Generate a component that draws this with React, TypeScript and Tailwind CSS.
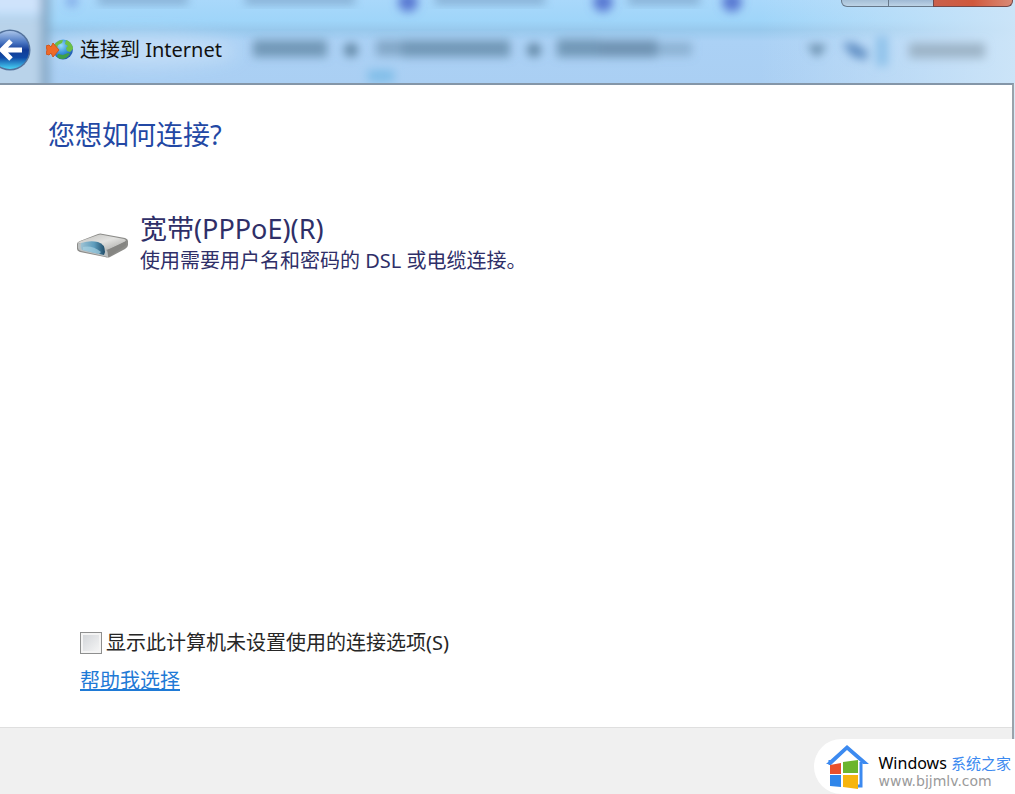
function GlassBackdrop() {
    return (
        <svg
            className="absolute inset-0 h-full w-full"
            viewBox="0 0 1015 83"
            preserveAspectRatio="none"
            aria-hidden="true"
        >
            <defs>
                <linearGradient id="glass" x1="0" y1="0" x2="0" y2="1">
                    <stop offset="0" stopColor="#a9d8fb" />
                    <stop offset="0.25" stopColor="#9fd5f9" />
                    <stop offset="0.36" stopColor="#98c9ed" />
                    <stop offset="0.5" stopColor="#abd1f5" />
                    <stop offset="1" stopColor="#aacff3" />
                </linearGradient>
                <linearGradient id="glassRight" x1="0" y1="0" x2="1" y2="0">
                    <stop offset="0" stopColor="#cde5f8" stopOpacity="0" />
                    <stop offset="1" stopColor="#cde5f8" stopOpacity="0.95" />
                </linearGradient>
                <filter id="soft" x="-20%" y="-50%" width="140%" height="200%">
                    <feGaussianBlur stdDeviation="5" />
                </filter>
                <filter id="softer" x="-30%" y="-80%" width="160%" height="260%">
                    <feGaussianBlur stdDeviation="9" />
                </filter>
            </defs>
            <rect width="1015" height="83" fill="url(#glass)" />
            <rect x="760" width="255" height="83" fill="url(#glassRight)" />

            {/* window behind, left edge */}
            <g filter="url(#soft)">
                <rect x="-10" y="-10" width="52" height="24" fill="#cfe3fb" />
                <rect x="-10" y="16" width="52" height="80" fill="#b9d3ea" />
                <rect x="41" y="-10" width="8" height="110" fill="#7fa2c0" />
            </g>
            <ellipse cx="145" cy="51" rx="92" ry="15" fill="#c8e0f7" opacity="0.8" filter="url(#softer)" />

            {/* tab strip */}
            <g filter="url(#soft)" fill="#7398bd" opacity="0.7">
                <rect x="98" y="-5" width="90" height="9" />
                <rect x="245" y="-5" width="110" height="9" />
                <rect x="435" y="-5" width="110" height="9" />
                <rect x="628" y="-5" width="72" height="9" />
            </g>
            <g filter="url(#soft)" fill="#5878d2">
                <circle cx="72" cy="1" r="6" opacity="0.5" />
                <circle cx="408" cy="2" r="10" />
                <circle cx="603" cy="2" r="10" />
                <circle cx="732" cy="2" r="10" />
            </g>

            {/* address bar */}
            <g filter="url(#soft)" fill="#6085a3">
                <rect x="253" y="40" width="74" height="17" opacity="0.75" />
                <circle cx="351" cy="50" r="7" />
                <rect x="376" y="40" width="26" height="16" opacity="0.55" />
                <rect x="402" y="40" width="108" height="17" opacity="0.75" />
                <circle cx="534" cy="50" r="7" />
                <rect x="557" y="39" width="42" height="18" opacity="0.75" />
                <rect x="599" y="40" width="58" height="17" opacity="0.8" />
                <rect x="657" y="42" width="35" height="14" opacity="0.4" />
                <path d="M807 45h20l-10 12z" />
                <path d="M842 43l12 0 14 9-2 8-14-4z" fill="#5f8dc2" />
                <rect x="909" y="43" width="76" height="15" fill="#94a9bc" opacity="0.8" />
                <rect x="876" y="36" width="12" height="30" fill="#8fc2ea" />
                <rect x="368" y="70" width="26" height="12" fill="#7fbde8" />
            </g>
        </svg>
    );
}

function WindowButtons() {
    return (
        <div className="relative flex h-2 items-start justify-end pr-0.5">
            <button
                aria-label="最小化"
                className="h-[7px] w-12 rounded-bl-md border border-t-0 border-[#66788a] bg-gradient-to-b from-[#a5bfd6] to-[#bdd3e6]"
            />
            <button
                aria-label="最大化"
                className="h-[7px] w-11 border-b border-[#66788a] bg-gradient-to-b from-[#9fb9d4] to-[#bdd3e6]"
            />
            <button
                aria-label="关闭"
                className="h-[7px] w-20 rounded-br-md border border-t-0 border-[#71484a] bg-gradient-to-r from-[#c9604b] via-[#d0583c] to-[#d98a76]"
            />
        </div>
    );
}

function BackIcon() {
    return (
        <svg className="h-11 w-8" viewBox="0 0 32 44" aria-hidden="true">
            <defs>
                <linearGradient id="orb" x1="0" y1="0" x2="0" y2="1">
                    <stop offset="0" stopColor="#a9c4ea" />
                    <stop offset="0.3" stopColor="#4a76c2" />
                    <stop offset="0.5" stopColor="#123b96" />
                    <stop offset="0.7" stopColor="#0f4aa6" />
                    <stop offset="1" stopColor="#49d3f5" />
                </linearGradient>
            </defs>
            <circle cx="10" cy="22" r="20.5" fill="#53729c" />
            <circle cx="10" cy="22" r="19" fill="url(#orb)" />
            <path
                d="M22 22H3M11 13l-9 9 9 9"
                fill="none"
                stroke="#fff"
                strokeWidth="5"
                strokeLinejoin="round"
            />
        </svg>
    );
}

function InternetIcon() {
    return (
        <svg className="h-6 w-7" viewBox="0 0 28 24" aria-hidden="true">
            <defs>
                <radialGradient id="globe" cx="0.4" cy="0.3" r="0.75">
                    <stop offset="0" stopColor="#9adcf8" />
                    <stop offset="0.5" stopColor="#3b95dc" />
                    <stop offset="1" stopColor="#1c4ea6" />
                </radialGradient>
            </defs>
            <circle cx="17" cy="11.5" r="10" fill="url(#globe)" />
            <path d="M8 7c2-3 5-5 9-5l-1 3-4 2-1 3-2 1z" fill="#6cbf45" />
            <path d="M20 2c4 1 7 5 7 9l-3 3-3-1-1-3 2-2-3-2z" fill="#6cc045" />
            <path d="M12 16l5 1 5-2 2 1c-2 3-5 5-8 5-2 0-4-1-5-2z" fill="#3f9f49" />
            <path d="M0 8l3-1 2 2 2-4 6 7-6 7-2-4-2 2-3-1 1-4z" fill="#ee6a28" stroke="#d0571f" strokeWidth="1" />
        </svg>
    );
}

function ModemIcon() {
    return (
        <svg className="h-7 w-[52px] shrink-0" viewBox="0 0 52 28" aria-hidden="true">
            <defs>
                <linearGradient id="lid" x1="0" y1="0" x2="1" y2="1">
                    <stop offset="0" stopColor="#c0c0bd" />
                    <stop offset="0.5" stopColor="#e2e2e0" />
                    <stop offset="1" stopColor="#a5a5a2" />
                </linearGradient>
                <linearGradient id="panel" x1="0" y1="0" x2="1" y2="0">
                    <stop offset="0" stopColor="#9fc3d4" />
                    <stop offset="0.55" stopColor="#5e9dbd" />
                    <stop offset="1" stopColor="#1f4c69" />
                </linearGradient>
            </defs>
            <path d="M1 13Q1 11 4 10L22 3q2-1 5 0l22 4q3 1 3 3v4q0 2-3 4L34 26q-2 1-5 0L4 21q-3-1-3-3z" fill="#8c8c89" />
            <path d="M2 12Q2 11 5 10L22 4q2-1 5 0l21 4q3 1 1 3L33 18q-2 1-4 1z" fill="url(#lid)" />
            <path d="M2 12l27 6q3 1 3 8L5 20q-3-1-3-3z" fill="#bcc1c2" />
            <path d="M5 12q9-3 17-1 7 2 7 10l-1 3L6 19q-2-2-1-7z" fill="url(#panel)" />
            <path d="M7 16q9-2 18 5l-2 2-16-4z" fill="#a6d2e2" opacity="0.7" />
            <path d="M32 19l18-9v4L34 25q-2 1-2-1z" fill="#858582" />
        </svg>
    );
}

function HouseLogo() {
    return (
        <svg className="h-11 w-11 shrink-0" viewBox="0 0 44 44" aria-hidden="true">
            <path d="M4 15v5M35 17v24h-4" fill="none" stroke="#3c8af0" strokeWidth="3" />
            <path d="M0 19L21 0l22 19h-6L21 5 6 19z" fill="#3c8af0" />
            <path d="M4 20l11-2v11H4z" fill="#e8502c" />
            <path d="M17 17l15-2v13H17z" fill="#6cb52d" />
            <path d="M4 30h11v12L4 41z" fill="#2f86ea" />
            <path d="M17 30h15v14l-15-2z" fill="#f6b50e" />
        </svg>
    );
}

function SiteBadge() {
    return (
        <div className="absolute right-0 bottom-0 flex h-[55px] items-center gap-2 rounded-l-full bg-white pr-1 pl-3">
            <HouseLogo />
            <div className="flex flex-col pt-2">
                <span className="text-base leading-5 whitespace-nowrap text-black">
                    Windows <span className="text-[15px] text-[#3c8af0]">系统之家</span>
                </span>
                <span className="font-['DejaVu_Sans',sans-serif] text-sm leading-4 text-[#9a9a9a]">
                    www.bjjmlv.com
                </span>
            </div>
        </div>
    );
}

export default function App() {
    return (
        <div className="relative flex min-h-screen flex-col overflow-hidden bg-[#d9e9f6] font-['Noto_Sans','Noto_Sans_CJK_SC',sans-serif]">
            <header className="relative h-[83px]">
                <GlassBackdrop />
                <WindowButtons />
                <div className="relative flex h-[84px] items-center">
                    <button aria-label="后退">
                        <BackIcon />
                    </button>
                    <div className="ml-3.5 flex items-center gap-1.5">
                        <InternetIcon />
                        <h1 className="text-xl text-[#111]">连接到 Internet</h1>
                    </div>
                </div>
            </header>

            <div className="mr-px flex flex-1 flex-col border-t-2 border-r-2 border-t-[#8496a8] border-r-[#9aa3ab]">
                <main className="flex flex-1 flex-col bg-white px-12 pt-[30px] pb-8">
                    <h2 className="text-[27px] leading-10 text-[#2348a4]">您想如何连接?</h2>

                    <button className="mt-14 ml-7 flex items-center gap-3 self-start text-left text-[#2f2f68]">
                        <span className="pt-1">
                            <ModemIcon />
                        </span>
                        <span className="flex flex-col">
                            <span className="text-[27px] leading-9">宽带(PPPoE)(R)</span>
                            <span className="text-xl leading-7">使用需要用户名和密码的 DSL 或电缆连接。</span>
                        </span>
                    </button>

                    <div className="mt-auto ml-8 flex flex-col items-start gap-2.5">
                        <label className="flex items-center gap-1 text-xl leading-7 text-[#262626]">
                            <input
                                type="checkbox"
                                className="size-[22px] appearance-none border border-[#8e8f8f] bg-gradient-to-br from-[#cfd2d6] to-[#f8f8f8] ring-2 ring-[#f4f4f4] ring-inset checked:bg-[#2f86ea]"
                            />
                            显示此计算机未设置使用的连接选项(S)
                        </label>
                        <a href="#help" className="text-xl leading-7 text-[#1f7ad6] underline">
                            帮助我选择
                        </a>
                    </div>
                </main>
                <footer className="h-[67px] border-t border-[#dfdfdf] bg-[#f0f0f0]" />
            </div>

            <SiteBadge />
        </div>
    );
}
